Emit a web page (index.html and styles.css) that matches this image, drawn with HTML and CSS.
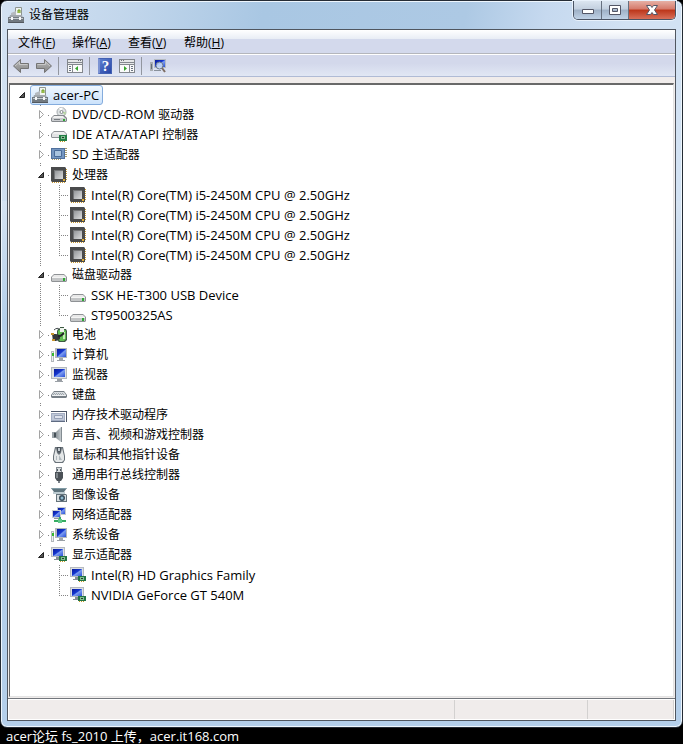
FILE: index.html
```
<!DOCTYPE html>
<html lang="zh-CN">
<head>
  <meta charset="UTF-8">
  <meta name="viewport" content="width=device-width, initial-scale=1.0">
  <title>设备管理器</title>
  <link rel="stylesheet" href="styles.css">
</head>
<body>

  <!-- Icon set -->
  <svg class="sprite" width="0" height="0" aria-hidden="true">
    <defs>
      <linearGradient id="screen" x1="0" y1="0" x2="1" y2="1">
        <stop offset="0" stop-color="#0a1c96"/><stop offset=".45" stop-color="#1536d0"/><stop offset=".55" stop-color="#7c9cf0"/><stop offset="1" stop-color="#2a50d8"/>
      </linearGradient>
      <linearGradient id="chip" x1="0" y1="0" x2="1" y2="1">
        <stop offset="0" stop-color="#8c8f92"/><stop offset="1" stop-color="#dcddde"/>
      </linearGradient>
      <linearGradient id="arrow" x1="0" y1="0" x2="0" y2="1">
        <stop offset="0" stop-color="#b8b8b8"/><stop offset="1" stop-color="#868686"/>
      </linearGradient>
      <linearGradient id="cone" x1="0" y1="0" x2="1" y2="0">
        <stop offset="0" stop-color="#5e686f"/><stop offset="1" stop-color="#cfd5d8"/>
      </linearGradient>
    </defs>

    <symbol id="i-manager" viewBox="0 0 16 16">
      <path d="M7.500 .5h6v8h-6z" fill="#f2f5f2" stroke="#8e9690"/>
      <path d="M10 6V3h2v3" fill="#c4dc68" stroke="#6d9a28"/>
      <path d="M3 6l5-2v5H3z" fill="#b5babf"/>
      <path d="M2 8h12l1 3H1z" fill="#a2a8ad"/>
      <path d="M0 10h16v5H0z" fill="#727a81"/>
      <path d="M1 11h14v1H1z" fill="#c8ced2"/>
      <path d="M3 10h2v3H3zM11 10h2v3h-2z" fill="#f7f8f9"/>
      <path d="M0 15h16v1H0z" fill="#53595f"/>
    </symbol>

    <symbol id="i-drive" viewBox="0 0 16 16">
      <path d="M3 7h10l3 3v4l-1 1H1l-1-1v-4z" fill="#8f9295"/>
      <path d="M3 8h10l2 2H1z" fill="#e9e9e9"/>
      <path d="M1 10h14v4H1z" fill="#c4c6c7"/>
      <path d="M1 10h14v1H1z" fill="#f4f4f4"/>
      <path d="M12 11h2v3h-2z" fill="#2fa836"/>
    </symbol>

    <symbol id="i-dvd" viewBox="0 0 16 16">
      <circle cx="10.500" cy="5" r="4.500" fill="#dfe3e4" stroke="#a6abae"/>
      <path d="M10 4L8 1l4-.5z" fill="#fff"/>
      <path d="M11 5l3 3 1-3z" fill="#b7d8a2"/>
      <circle cx="10.500" cy="5" r="1.500" fill="#fff" stroke="#848a8e"/>
      <path d="M3 8h10l3 3v3l-1 1H1l-1-1v-3z" fill="#85898d"/>
      <path d="M3 9h9l2 2H1z" fill="#f0f0f0"/>
      <path d="M1 11h14v3H1z" fill="#cacccf"/>
      <path d="M3 12h6v1H3z" fill="#777c80"/>
      <path d="M12 12h2v2h-2z" fill="#2fa836"/>
    </symbol>

    <symbol id="i-ide" viewBox="0 0 16 16">
      <path d="M3 4h10l3 3v3l-1 1H1l-1-1V7z" fill="#8d9195"/>
      <path d="M3 5h10l2 2H1z" fill="#efefef"/>
      <path d="M1 7h14v3H1z" fill="#e2e3e4"/>
      <path d="M8 8h8v6H8z" fill="#237d45"/>
      <path d="M10 9h4v3h-4z" fill="#82bd91"/>
      <path d="M11 10h2v1h-2z" fill="#183e24"/>
      <path d="M9 14h1v1H9zm2 0h1v1h-1zm2 0h1v1h-1z" fill="#c59b29"/>
    </symbol>

    <symbol id="i-sd" viewBox="0 0 16 16">
      <path d="M0 1h14v11H0z" fill="#50719d"/>
      <path d="M1 2h12v9H1z" fill="#7496c0"/>
      <path d="M3.500 3.500h7v6h-7z" fill="#a9c4df" stroke="#496b98"/>
      <path d="M14 1h2v1h-2zm0 2h2v1h-2zm0 2h2v1h-2zm0 2h2v1h-2zm0 2h2v1h-2zM1 12h1v1H1zm2 0h1v1H3zm2 0h1v1H5zm2 0h1v1H7zm2 0h1v1H9z" fill="#a89b6b"/>
    </symbol>

    <symbol id="i-cpu" viewBox="0 0 16 16">
      <path d="M1 14h1v2H1zm2 0h1v2H3zm2 0h1v2H5zm2 0h1v2H7zm2 0h1v2H9zm2 0h1v2h-1zm2 0h1v2h-1zM14 2h2v1h-2zm0 2h2v1h-2zm0 2h2v1h-2zm0 2h2v1h-2zm0 2h2v1h-2zm0 2h2v1h-2z" fill="#c99a35"/>
      <path d="M0 0h14l1 1v14H1l-1-1z" fill="#4a4b4c"/>
      <path d="M3 3h9v9H3z" fill="url(#chip)"/>
      <path d="M3 3h9v1H4v8H3z" fill="#747678"/>
      <path d="M12 12h2v2h-2z" fill="#e0ad35"/>
    </symbol>

    <symbol id="i-battery" viewBox="0 0 16 16">
      <path d="M3 3c2-2 4-2 6-1" fill="none" stroke="#454b4f"/>
      <path d="M7 2h2V0h4v2h2l1 2v9l-2 2H8l-2-2V4z" fill="#3d5a43"/>
      <path d="M8 3h6l1 1v8l-2 2H9l-2-2V4z" fill="#60bd51"/>
      <path d="M9 1h4v4H9z" fill="#edf3eb"/>
      <path d="M12 5h2v7h-2z" fill="#c4efb4"/>
      <path d="M1 7h4l4 1v4l-4 2H2z" fill="#34383a"/>
      <path d="M0 6h3v2H0zM1 12h3v2H1z" fill="#c7952d"/>
      <path d="M7 9c4 1 4-2 6-3" fill="none" stroke="#202426" stroke-width="2"/>
    </symbol>

    <symbol id="i-monitor" viewBox="0 0 16 16">
      <path d="M0 0h16v12H0z" fill="#b4b9be"/>
      <path d="M1 1h14v10H1z" fill="#dde1e4"/>
      <path d="M3 2h11v8H3z" fill="url(#screen)"/>
      <path d="M6 12h5v2H6z" fill="#989da3"/>
      <path d="M4 14h8v1H4z" fill="#9ba1a7"/>
    </symbol>

    <symbol id="i-computer" viewBox="0 0 16 16">
      <path d="M0 4h3v11H0z" fill="#b3b8bc"/>
      <path d="M1 5h1v9H1z" fill="#eef0f1"/>
      <path d="M1 6h2v3H1z" fill="#36b72f"/>
      <path d="M4 1h12v10H4z" fill="#b4b8bc"/>
      <path d="M6 2h9v8H6z" fill="url(#screen)"/>
      <path d="M8 11h4v2H8z" fill="#a0a5aa"/>
      <path d="M6 13h8v1H6z" fill="#9aa0a6"/>
    </symbol>

    <symbol id="i-keyboard" viewBox="0 0 16 16">
      <path d="M3 4h10l3 4v2l-1 1H1l-1-1V8z" fill="#777f86"/>
      <path d="M3 5h10l2 3H1z" fill="#d8dcdf"/>
      <path d="M3 6h1v1H3zm2 0h1v1H5zm2 0h1v1H7zm2 0h1v1H9zm2 0h1v1h-1zM2 7h1v1H2zm2 0h1v1H4zm2 0h1v1H6zm2 0h1v1H8zm2 0h1v1h-1zm2 0h1v1h-1z" fill="#9fa6ac"/>
      <path d="M1 8h14v1H1z" fill="#eef0f2"/>
    </symbol>

    <symbol id="i-memory" viewBox="0 0 16 16">
      <path d="M0 4h16v1H0zM15 4h1v11h-1z" fill="#4d5668"/>
      <path d="M0 6h14v8H0z" fill="#a3adc2"/>
      <path d="M1 7h12v6H1z" fill="#c0c8d8"/>
      <path d="M3.500 8.500h8v3h-8z" fill="#e0e4ee" stroke="#96a0b6"/>
      <path d="M0 14h14v1H0z" fill="#5e6b82"/>
    </symbol>

    <symbol id="i-sound" viewBox="0 0 16 16">
      <path d="M1 5h4l5-5h1v15h-1l-5-4H1z" fill="url(#cone)"/>
      <path d="M1 5h2v6H1z" fill="#9ba3a8"/>
      <path d="M3 6h2v4H3z" fill="#465057"/>
      <path d="M10.500 0v15" stroke="#838c92"/>
    </symbol>

    <symbol id="i-mouse" viewBox="0 0 16 16">
      <path d="M4 0h8l2 9v4l-2 3H4l-2-3V9z" fill="#6a737a"/>
      <path d="M5 1L3 9v4l2 2h6l2-2V9l-2-8-1 5-2 2-2-2z" fill="#e4e7e8"/>
      <path d="M6 0h4v4L8 6 6 4z" fill="#4a535b"/>
      <path d="M7 1h2v3H7z" fill="#c1c9cf"/>
      <path d="M5 9h1v4H5zM8 8l3 5H8z" fill="#b1b9be"/>
    </symbol>

    <symbol id="i-usb" viewBox="0 0 16 16">
      <path d="M5 0h6v5H5z" fill="#858d94"/>
      <path d="M6 1h4v4H6z" fill="#d9dddf"/>
      <path d="M6 2h1v2H6zm3 0h1v2H9z" fill="#525b62"/>
      <path d="M4 5h8v6l-2 3H6l-2-3z" fill="#4b5157"/>
      <path d="M5 6h2v5H5z" fill="#7f868b"/>
      <path d="M7 14h2v2H7z" fill="#7a8289"/>
    </symbol>

    <symbol id="i-imaging" viewBox="0 0 16 16">
      <path d="M0 1h16l-3 4H3z" fill="#5f757f"/>
      <path d="M1 1h14v1H1z" fill="#829ca6"/>
      <path d="M2 5h12v2H2z" fill="#bccbd1"/>
      <path d="M5 7h10l1 1v7H5z" fill="#65737b"/>
      <path d="M6 8h9v6H6z" fill="#d7dee1"/>
      <circle cx="11" cy="11" r="3" fill="#394e5c"/>
      <circle cx="11" cy="11" r="1.500" fill="#8eb9cf"/>
    </symbol>

    <symbol id="i-network" viewBox="0 0 16 16">
      <path d="M6 0h9v8H6z" fill="#c3c9ce"/>
      <path d="M7 1h7v6H7z" fill="url(#screen)"/>
      <path d="M1 3h9v8H1z" fill="#c9ced2"/>
      <path d="M2 4h7v6H2z" fill="url(#screen)"/>
      <path d="M3 11h5v1H3z" fill="#8c969e"/>
      <path d="M8 10h2v3H8zM3 13h12v2H3z" fill="#36ac62"/>
      <path d="M7 12h4v4H7z" fill="#5fc98a"/>
    </symbol>

    <symbol id="i-display" viewBox="0 0 16 16">
      <path d="M0 0h14v10H0z" fill="#b7bbc0"/>
      <path d="M1 1h12v8H1z" fill="#dde0e4"/>
      <path d="M2 2h10v7H2z" fill="url(#screen)"/>
      <path d="M5 10h4v2H5zM3 12h6v1H3z" fill="#858d95"/>
      <path d="M8 9h8v5H8z" fill="#237443"/>
      <path d="M10 10h4v3h-4z" fill="#83bf91"/>
      <path d="M11 11h2v1h-2z" fill="#1e4229"/>
      <path d="M9 14h1v1H9zm2 0h1v1h-1zm2 0h1v1h-1z" fill="#c59b29"/>
    </symbol>

    <symbol id="i-back" viewBox="0 0 16 16">
      <path d="M.5 8L7.500 1.500v4h8v5h-8v4z" fill="url(#arrow)" stroke="#747474"/>
      <path d="M2 8l4.500-4v2.500h8" fill="none" stroke="#c8c8c8"/>
    </symbol>

    <symbol id="i-panel" viewBox="0 0 16 14">
      <path d="M0 0h16v14H0z" fill="#83878d"/>
      <path d="M1 1h14v2H1z" fill="#e6e7e9"/>
      <path d="M11 1h1v1h-1zm2 0h1v1h-1z" fill="#71767e"/>
      <path d="M1 4h14v1H1z" fill="#e6e7e9"/>
      <path d="M1 6h4v7H1zM6 6h9v7H6z" fill="#fafafa"/>
      <path d="M2 7h2v1H2zm0 2h2v1H2zm0 2h2v1H2z" fill="#6b7482"/>
      <path d="M11 7v5L8 9.500z" fill="#35a52c"/>
    </symbol>

    <symbol id="i-scan" viewBox="0 0 16 16">
      <path d="M0 4h3v9H0z" fill="#a8adb2"/>
      <path d="M1 6h1v5H1z" fill="#646e78"/>
      <path d="M4 1h12v9H4z" fill="#b6bbc2"/>
      <path d="M5 2h10v7H5z" fill="url(#screen)"/>
      <path d="M4 12h7v1H4z" fill="#89919b"/>
      <circle cx="9.500" cy="7.500" r="3.500" fill="#cfe1f8" fill-opacity=".8" stroke="#69788b"/>
      <path d="M12 10l3 4" stroke="#7d6d63" stroke-width="2"/>
    </symbol>

    <symbol id="t-closed" viewBox="0 0 10 10">
      <path d="M3.500 .5v8l4-4z" fill="#fff" stroke="#a3a3a3"/>
    </symbol>
    <symbol id="t-open" viewBox="0 0 10 10">
      <path d="M7.500 2.500v5h-5z" fill="#555" stroke="#222"/>
    </symbol>
  </svg>

  <div class="window">
    <header class="titlebar">
      <svg class="icon"><use href="#i-manager"/></svg>
      <h1>设备管理器</h1>
      <div class="window-buttons">
        <button class="minimize" aria-label="最小化">
          <svg width="14" height="14"><path d="M1.500 6.500h11v4h-11z" fill="#fff" stroke="#535666"/></svg>
        </button>
        <button class="maximize" aria-label="最大化">
          <svg width="14" height="14"><path d="M1.500 2.500h11v9h-11zM4.500 5.500h5v3h-5z" fill="#fff" fill-rule="evenodd" stroke="#535666"/></svg>
        </button>
        <button class="close" aria-label="关闭">
          <svg width="14" height="14"><path d="M1.500 2.500h4L7 4.500l1.500-2h4L9.500 7l3 4.500h-4L7 9.500l-1.500 2h-4l3-4.500z" fill="#fff" stroke="#535666"/></svg>
        </button>
      </div>
    </header>

    <main class="client">
      <nav class="menubar">
        <button>文件(<u>F</u>)</button>
        <button>操作(<u>A</u>)</button>
        <button>查看(<u>V</u>)</button>
        <button>帮助(<u>H</u>)</button>
      </nav>

      <div class="toolbar">
        <button aria-label="后退"><svg class="icon"><use href="#i-back"/></svg></button>
        <button aria-label="前进"><svg class="icon flip"><use href="#i-back"/></svg></button>
        <span class="separator"></span>
        <button aria-label="显示/隐藏控制台树"><svg class="icon panel"><use href="#i-panel"/></svg></button>
        <span class="separator"></span>
        <button class="help" aria-label="帮助">?</button>
        <button aria-label="显示/隐藏操作窗格"><svg class="icon panel flip"><use href="#i-panel"/></svg></button>
        <span class="separator"></span>
        <button aria-label="扫描检测硬件改动"><svg class="icon"><use href="#i-scan"/></svg></button>
      </div>

      <section class="tree">
        <ul class="root">
          <li>
            <div class="row">
              <button class="toggle" aria-label="折叠"><svg><use href="#t-open"/></svg></button>
              <span class="label selected"><svg class="icon"><use href="#i-manager"/></svg><span class="latin">acer-PC</span></span>
            </div>
            <ul>
              <li>
                <div class="row">
                  <button class="toggle" aria-label="展开"><svg><use href="#t-closed"/></svg></button>
                  <span class="label"><svg class="icon"><use href="#i-dvd"/></svg><span><span class="latin">DVD/CD-ROM</span> 驱动器</span></span>
                </div>
              </li>
              <li>
                <div class="row">
                  <button class="toggle" aria-label="展开"><svg><use href="#t-closed"/></svg></button>
                  <span class="label"><svg class="icon"><use href="#i-ide"/></svg><span><span class="latin">IDE ATA/ATAPI</span> 控制器</span></span>
                </div>
              </li>
              <li>
                <div class="row">
                  <button class="toggle" aria-label="展开"><svg><use href="#t-closed"/></svg></button>
                  <span class="label"><svg class="icon"><use href="#i-sd"/></svg><span><span class="latin">SD</span> 主适配器</span></span>
                </div>
              </li>
              <li>
                <div class="row">
                  <button class="toggle" aria-label="折叠"><svg><use href="#t-open"/></svg></button>
                  <span class="label"><svg class="icon"><use href="#i-cpu"/></svg>处理器</span>
                </div>
                <ul class="devices">
                  <li><span class="label"><svg class="icon"><use href="#i-cpu"/></svg>Intel(R) Core(TM) i5-2450M CPU @ 2.50GHz</span></li>
                  <li><span class="label"><svg class="icon"><use href="#i-cpu"/></svg>Intel(R) Core(TM) i5-2450M CPU @ 2.50GHz</span></li>
                  <li><span class="label"><svg class="icon"><use href="#i-cpu"/></svg>Intel(R) Core(TM) i5-2450M CPU @ 2.50GHz</span></li>
                  <li><span class="label"><svg class="icon"><use href="#i-cpu"/></svg>Intel(R) Core(TM) i5-2450M CPU @ 2.50GHz</span></li>
                </ul>
              </li>
              <li>
                <div class="row">
                  <button class="toggle" aria-label="折叠"><svg><use href="#t-open"/></svg></button>
                  <span class="label"><svg class="icon"><use href="#i-drive"/></svg>磁盘驱动器</span>
                </div>
                <ul class="devices">
                  <li><span class="label"><svg class="icon"><use href="#i-drive"/></svg>SSK HE-T300 USB Device</span></li>
                  <li><span class="label"><svg class="icon"><use href="#i-drive"/></svg>ST9500325AS</span></li>
                </ul>
              </li>
              <li>
                <div class="row">
                  <button class="toggle" aria-label="展开"><svg><use href="#t-closed"/></svg></button>
                  <span class="label"><svg class="icon"><use href="#i-battery"/></svg>电池</span>
                </div>
              </li>
              <li>
                <div class="row">
                  <button class="toggle" aria-label="展开"><svg><use href="#t-closed"/></svg></button>
                  <span class="label"><svg class="icon"><use href="#i-computer"/></svg>计算机</span>
                </div>
              </li>
              <li>
                <div class="row">
                  <button class="toggle" aria-label="展开"><svg><use href="#t-closed"/></svg></button>
                  <span class="label"><svg class="icon"><use href="#i-monitor"/></svg>监视器</span>
                </div>
              </li>
              <li>
                <div class="row">
                  <button class="toggle" aria-label="展开"><svg><use href="#t-closed"/></svg></button>
                  <span class="label"><svg class="icon"><use href="#i-keyboard"/></svg>键盘</span>
                </div>
              </li>
              <li>
                <div class="row">
                  <button class="toggle" aria-label="展开"><svg><use href="#t-closed"/></svg></button>
                  <span class="label"><svg class="icon"><use href="#i-memory"/></svg>内存技术驱动程序</span>
                </div>
              </li>
              <li>
                <div class="row">
                  <button class="toggle" aria-label="展开"><svg><use href="#t-closed"/></svg></button>
                  <span class="label"><svg class="icon"><use href="#i-sound"/></svg>声音、视频和游戏控制器</span>
                </div>
              </li>
              <li>
                <div class="row">
                  <button class="toggle" aria-label="展开"><svg><use href="#t-closed"/></svg></button>
                  <span class="label"><svg class="icon"><use href="#i-mouse"/></svg>鼠标和其他指针设备</span>
                </div>
              </li>
              <li>
                <div class="row">
                  <button class="toggle" aria-label="展开"><svg><use href="#t-closed"/></svg></button>
                  <span class="label"><svg class="icon"><use href="#i-usb"/></svg>通用串行总线控制器</span>
                </div>
              </li>
              <li>
                <div class="row">
                  <button class="toggle" aria-label="展开"><svg><use href="#t-closed"/></svg></button>
                  <span class="label"><svg class="icon"><use href="#i-imaging"/></svg>图像设备</span>
                </div>
              </li>
              <li>
                <div class="row">
                  <button class="toggle" aria-label="展开"><svg><use href="#t-closed"/></svg></button>
                  <span class="label"><svg class="icon"><use href="#i-network"/></svg>网络适配器</span>
                </div>
              </li>
              <li>
                <div class="row">
                  <button class="toggle" aria-label="展开"><svg><use href="#t-closed"/></svg></button>
                  <span class="label"><svg class="icon"><use href="#i-computer"/></svg>系统设备</span>
                </div>
              </li>
              <li>
                <div class="row">
                  <button class="toggle" aria-label="折叠"><svg><use href="#t-open"/></svg></button>
                  <span class="label"><svg class="icon"><use href="#i-display"/></svg>显示适配器</span>
                </div>
                <ul class="devices">
                  <li><span class="label"><svg class="icon"><use href="#i-display"/></svg>Intel(R) HD Graphics Family</span></li>
                  <li><span class="label"><svg class="icon"><use href="#i-display"/></svg>NVIDIA GeForce GT 540M</span></li>
                </ul>
              </li>
            </ul>
          </li>
        </ul>
      </section>

      <footer class="statusbar">
        <span></span>
        <span></span>
        <span></span>
      </footer>
    </main>
  </div>

  <div class="credit">acer论坛 fs_2010 上传，acer.it168.com</div>

</body>
</html>
```
FILE: styles.css
```
* {
  box-sizing: border-box;
}
body {
  display: flex;
  flex-direction: column;
  min-height: 100vh;
  margin: 0;
  background-color: #000;
  font-family: 'Open Sans', 'Noto Sans CJK SC', sans-serif;
  font-size: 12px;
  color: #000;
}
button {
  margin: 0;
  padding: 0;
  border: none;
  background: none;
  font: inherit;
  color: inherit;
}
ul {
  list-style: none;
  margin: 0;
  padding: 0;
}
svg {
  display: block;
  flex: none;
}
.sprite {
  position: absolute;
}
.icon {
  width: 16px;
  height: 16px;
}
.flip {
  transform: scaleX(-1);
}

/* Window frame */
.window {
  flex: 1;
  display: flex;
  flex-direction: column;
  padding: 0 6px 6px;
  border: 1px solid #252c35;
  border-radius: 7px;
  background: linear-gradient(100deg, #d3e2f2 0, #c3d7ec 120px, #a9c7e3 260px, #adc9e4 460px, #c6d9ef 540px, #d2e2f3 620px) 0 0 / 100% 200px no-repeat, linear-gradient(#d5e3f2 200px, #b4cfea 320px);
  box-shadow: inset 0 0 0 1px #eef6fd;
}
.titlebar {
  display: flex;
  align-items: center;
  height: 28px;
  padding-left: 1px;
}
.titlebar h1 {
  flex: 1;
  margin: 0 0 0 5px;
  font-size: 12px;
  font-weight: normal;
  line-height: 16px;
}
.window-buttons {
  display: flex;
  align-self: flex-start;
  height: 19px;
  border: 1px solid #4b5464;
  border-top: none;
  border-radius: 0 0 5px 5px;
  overflow: hidden;
  box-shadow: 0 0 0 1px #e8f1fb;
}
.window-buttons button {
  display: flex;
  align-items: center;
  justify-content: center;
  width: 28px;
  border-right: 1px solid #66707f;
  background: linear-gradient(#dbe5f0 0, #c3d0df 45%, #9eb0c6 50%, #c0d2e6 100%);
}
.window-buttons .maximize {
  width: 27px;
}
.window-buttons .close {
  width: 46px;
  border-right: none;
  background: linear-gradient(#e6b0a5 0, #d5796a 45%, #bc3519 50%, #d8705a 100%);
}

/* Client area */
.client {
  flex: 1;
  display: flex;
  flex-direction: column;
  border: 1px solid #50565f;
  background-color: #f0eceb;
}
.menubar {
  display: flex;
  height: 24px;
  padding-left: 2px;
  border-bottom: 1px solid #b4b6bc;
  background: linear-gradient(#fff 0, #e8edf5 9px, #d3d9ec 9px);
}
.menubar button {
  width: 54px;
  padding-left: 8px;
  text-align: left;
  white-space: nowrap;
}
.menubar button + button {
  width: 56px;
}
.toolbar {
  display: flex;
  align-items: center;
  gap: 7px;
  height: 23px;
  padding-left: 5px;
  border-top: 1px solid #fff;
  border-bottom: 1px solid #b0bbd5;
  background: linear-gradient(#d3d8eb 40%, #e1e7f4);
}
.toolbar .separator {
  width: 1px;
  height: 18px;
  margin: 0 1px 0 -1px;
  background-color: #92969f;
}
.toolbar .panel {
  height: 14px;
}
.toolbar .help {
  width: 14px;
  height: 16px;
  border: 1px solid #4361b3;
  border-left: 2px solid #7b92d2;
  background: linear-gradient(135deg, #5e7fd0, #2745a6);
  color: #fff;
  font-family: 'Liberation Serif', serif;
  font-size: 15px;
  font-weight: bold;
  line-height: 14px;
}

/* Device tree */
.tree {
  flex: 1;
  margin: 6px 1px 1px;
  padding-left: 2px;
  border: 1px solid #e3e3e3;
  border-top: 2px solid #696969;
  border-left: 1px solid #696969;
  background-color: #fff;
}
.tree li {
  background-image:
    repeating-linear-gradient(#858585 0 1px, transparent 1px 2px),
    repeating-linear-gradient(90deg, #858585 0 1px, transparent 1px 2px);
  background-size: 1px 100%, 10px 1px;
  background-position: 9px 0, 9px 10px;
  background-repeat: no-repeat;
}
.tree li:last-child {
  background-size: 1px 10px, 10px 1px;
}
.tree .root > li {
  background-image: none;
}
.tree li ul {
  margin-left: 19px;
}
.tree .row {
  display: flex;
  height: 20px;
}
.toggle {
  display: flex;
  align-items: center;
  align-self: center;
  width: 16px;
  height: 16px;
  margin-right: 2px;
  padding-left: 5px;
  background-color: #fff;
}
.toggle svg {
  width: 10px;
  height: 10px;
}
.label {
  display: inline-flex;
  align-items: center;
  gap: 5px;
  height: 20px;
  padding: 0 3px 1px 1px;
  border: 1px solid transparent;
  border-radius: 3px;
  line-height: 16px;
  white-space: nowrap;
}
.label .icon {
  align-self: flex-end;
}
.label.selected {
  border-color: #84acdd;
  background: linear-gradient(#f0f7fe, #cbe2fb);
}
.latin,
.devices {
  font-size: 13px;
}
.devices li {
  display: flex;
  padding-left: 18px;
}

/* Status bar */
.statusbar {
  display: flex;
  height: 22px;
  padding: 1px 1px 1px 0;
  border-top: 1px solid #73777d;
  background-color: #f0eceb;
  box-shadow: inset 0 0 0 1px #fff;
}
.statusbar span {
  width: 133px;
  border-right: 1px solid #d3d1d0;
}
.statusbar span:first-child {
  flex: 1;
}
.statusbar span:last-child {
  width: 86px;
}

.credit {
  height: 16px;
  padding-left: 6px;
  font-size: 13px;
  line-height: 16px;
  color: #fff;
}
```
